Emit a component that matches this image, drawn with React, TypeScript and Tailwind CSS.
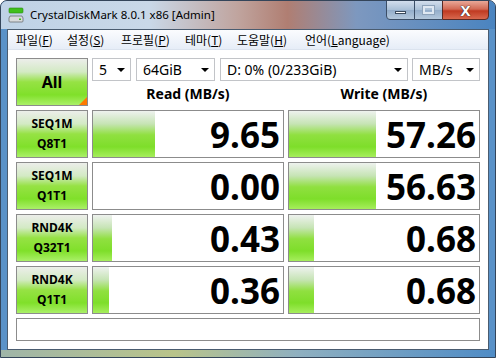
import React from "react";

const rows = [
  { l1: "SEQ1M", l2: "Q8T1", read: "9.65", rw: 62, write: "57.26", ww: 87 },
  { l1: "SEQ1M", l2: "Q1T1", read: "0.00", rw: 0, write: "56.63", ww: 87 },
  { l1: "RND4K", l2: "Q32T1", read: "0.43", rw: 19, write: "0.68", ww: 25 },
  { l1: "RND4K", l2: "Q1T1", read: "0.36", rw: 16, write: "0.68", ww: 25 },
];

const menus = [
  { t: "파일(", k: "F", w: "w-[51px]" },
  { t: "설정(", k: "S", w: "w-[54px]" },
  { t: "프로필(", k: "P", w: "w-[64px]" },
  { t: "테마(", k: "T", w: "w-[52px]" },
  { t: "도움말(", k: "H", w: "w-[68px]" },
];

const green =
  "bg-[linear-gradient(to_bottom,#eceeea_0%,#d3eac4_28%,#96e244_50%,#80e02a_78%,#aaf068_100%)]";

function Combo({ text, className }: { text: string; className: string }) {
  return (
    <div className={`flex items-center justify-between h-[23px] border border-[#c2c4c8] bg-white pl-[6px] pr-[5px] text-[14px] text-black ${className}`}>
      <span>{text}</span>
      <span className="w-0 h-0 border-l-[4px] border-r-[4px] border-t-[4px] border-l-transparent border-r-transparent border-t-black" />
    </div>
  );
}

function Cell({ value, bar }: { value: string; bar: number }) {
  return (
    <div className="relative h-[48px] w-[192px] border border-[#8c8c8c] bg-white">
      {bar > 0 && (
        <div
          className="absolute left-0 top-0 bottom-0 bg-[linear-gradient(to_bottom,#eef2ee_0%,#c6e4b4_28%,#90e040_52%,#7ede2a_78%,#a6ee5c_100%)]"
          style={{ width: bar }}
        />
      )}
      <div className="relative h-full flex items-center justify-end pr-[3px] text-[35px] font-bold text-black leading-none">
        {value}
      </div>
    </div>
  );
}

export default function App() {
  return (
    <div
      className="w-[496px] h-[358px] overflow-hidden rounded-t-[7px] border border-[#34455a] bg-[#5a92c8] flex flex-col text-black"
      style={{ fontFamily: '"Segoe UI", "Noto Sans", "Noto Sans CJK KR", sans-serif' }}
    >
      {/* title bar */}
      <div className="h-[28px] flex items-start bg-[linear-gradient(to_right,#bfd2e6_0%,#c9d8e8_30%,#c0a49e_48%,#b07e72_58%,#7d98bf_72%,#4a84c0_100%)]">
        <svg width="16" height="16" viewBox="0 0 16 16" className="ml-[7px] mt-[6px]">
          <rect x="1" y="1" width="14" height="5" rx="1" fill="#3fbf1c" stroke="#2a8a10" strokeWidth="0.6" />
          <path d="M2 9 h12 l1 2 v3 a1 1 0 0 1 -1 1 h-12 a1 1 0 0 1 -1 -1 v-3 z" fill="#d8dadc" stroke="#6a6e72" strokeWidth="0.8" />
          <rect x="11" y="11.5" width="2" height="1.5" fill="#39c019" />
        </svg>
        <span className="ml-[6px] mt-[5px] text-[11.5px] text-black">CrystalDiskMark 8.0.1 x86 [Admin]</span>
        <div className="ml-auto mr-[6px] flex h-[20px] -mt-px">
          <div className="w-[29px] h-full border border-[#3b4e66] rounded-bl-[4px] bg-[linear-gradient(to_bottom,#d2deec,#a9bfd6_50%,#93adca_51%,#b4c8dc)] flex items-end justify-center pb-[5px]">
            <div className="w-[11px] h-[3px] bg-white border border-[#3a4a5c]" />
          </div>
          <div className="w-[27px] h-full border-y border-[#3b4e66] bg-[linear-gradient(to_bottom,#d2deec,#a9bfd6_50%,#93adca_51%,#b4c8dc)] flex items-center justify-center">
            <div className="w-[11px] h-[8px] border-2 border-[#dfe8f2] outline outline-1 outline-[#8ea3ba]" />
          </div>
          <div className="w-[47px] h-full border border-[#5a2a24] rounded-br-[4px] bg-[linear-gradient(to_bottom,#e9a898,#d26a55_45%,#c03a22_55%,#d8684e)] flex items-center justify-center">
            <span className="text-white font-bold text-[15px] leading-none [text-shadow:0_0_1px_#222,0_0_1px_#222]">X</span>
          </div>
        </div>
      </div>

      {/* client area */}
      <div className="mx-[6px] flex-1 border border-[#4a5c70] bg-white flex flex-col">
        <div className="h-[20px] flex items-center pl-[8px] text-[12px] bg-[linear-gradient(to_bottom,#fbfcfe,#e6edf7)] border-b border-[#dbe3ee]" style={{ fontFamily: '"Noto Sans CJK KR", "Noto Sans", sans-serif' }}>
          {menus.map((m) => (
            <span key={m.k} className={m.w}>
              {m.t}
              <span className="underline">{m.k}</span>)
            </span>
          ))}
          <span>
            언어(<span className="underline">L</span>anguage)
          </span>
        </div>

        <div className="flex-1 px-[8px] pt-[8px] pb-[8px] flex flex-col gap-[4px]">
          <div className="flex gap-[4px]">
            <div className={`relative w-[72px] h-[48px] border border-[#8c8c8c] ${green} flex items-center justify-center text-[16px] font-bold`}>
              All
              <div className="absolute right-0 bottom-0 w-[8px] h-[8px] bg-[#ff7a00] [clip-path:polygon(100%_0,100%_100%,0_100%)]" />
            </div>
            <div className="flex flex-col">
              <div className="flex gap-[5px]">
                <Combo text="5" className="w-[39px]" />
                <Combo text="64GiB" className="w-[79px]" />
                <Combo text="D: 0% (0/233GiB)" className="w-[188px]" />
                <Combo text="MB/s" className="w-[68px] ml-[-1px]" />
              </div>
              <div className="flex gap-[4px] flex-1 items-center">
                <div className="w-[192px] text-center text-[14px] font-bold">Read (MB/s)</div>
                <div className="w-[192px] text-center text-[14px] font-bold">Write (MB/s)</div>
              </div>
            </div>
          </div>

          {rows.map((r, i) => (
            <div key={i} className="flex gap-[4px]">
              <div className={`w-[72px] h-[48px] border border-[#8c8c8c] ${green} flex flex-col items-center justify-center text-[12px] font-bold leading-[20px]`}>
                <span>{r.l1}</span>
                <span>{r.l2}</span>
              </div>
              <Cell value={r.read} bar={r.rw} />
              <Cell value={r.write} bar={r.ww} />
            </div>
          ))}

          <div className="h-[23px] border border-[#8c8c8c] bg-white" />
        </div>
      </div>

      {/* bottom frame */}
      <div className="h-[7px] bg-[linear-gradient(to_right,#9fb5a8_0%,#b9c48a_35%,#8fb0c0_60%,#4f8cc6_100%)]" />
    </div>
  );
}
